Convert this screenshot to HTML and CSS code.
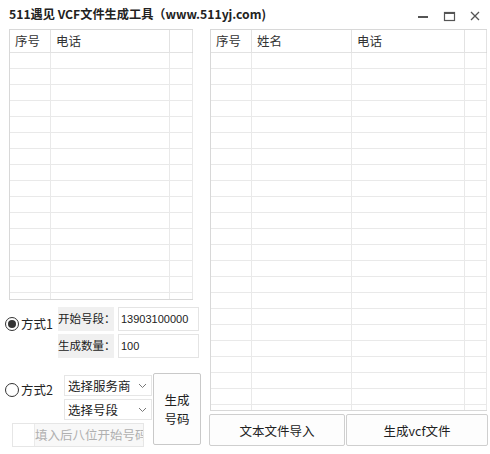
FILE: index.html
```html
<!DOCTYPE html>
<html>
<head>
<meta charset="utf-8">
<link rel="stylesheet" href="styles.css">
</head>
<body>
<div class="win">
  <div class="titlebar">
    <div class="title">511遇见 VCF文件生成工具（www.511yj.com)</div>
    <div class="controls">
      <svg class="ctl" width="14" height="14" viewBox="0 0 14 14"><rect x="2" y="7" width="10" height="2" fill="#555"/></svg>
      <svg class="ctl" width="14" height="14" viewBox="0 0 14 14"><rect x="2.5" y="3.5" width="10" height="8" fill="none" stroke="#555" stroke-width="1.2"/><rect x="2.5" y="3" width="10" height="2" fill="#555"/></svg>
      <svg class="ctl" width="14" height="14" viewBox="0 0 14 14"><path d="M3 3 L11 11 M11 3 L3 11" stroke="#555" stroke-width="1.3"/></svg>
    </div>
  </div>
  <div class="main">
    <div class="leftcol">
      <div class="grid grid-left">
        <div class="ghead">
          <div class="c c-no">序号</div>
          <div class="c c-tel1">电话</div>
          <div class="c c-sp"></div>
        </div>
        <div class="gbody">
          <div class="b c-no"></div>
          <div class="b c-tel1"></div>
          <div class="b c-sp last"></div>
        </div>
      </div>
      <div class="mode1">
        <div class="radio-row r1">
          <span class="radio checked"><span class="dot"></span></span>
          <span class="rlabel">方式1</span>
        </div>
        <div class="fields">
          <div class="frow">
            <span class="flabel">开始号段：</span>
            <span class="finput">13903100000</span>
          </div>
          <div class="frow">
            <span class="flabel">生成数量：</span>
            <span class="finput">100</span>
          </div>
        </div>
      </div>
      <div class="mode2">
        <div class="m2left">
          <div class="m2top">
            <div class="radio-row r2">
              <span class="radio"></span>
              <span class="rlabel">方式2</span>
            </div>
            <div class="selects">
              <div class="sel"><span>选择服务商</span><svg width="9" height="6" viewBox="0 0 9 6"><path d="M1 1 L4.5 4.5 L8 1" fill="none" stroke="#777" stroke-width="1"/></svg></div>
              <div class="sel"><span>选择号段</span><svg width="9" height="6" viewBox="0 0 9 6"><path d="M1 1 L4.5 4.5 L8 1" fill="none" stroke="#777" stroke-width="1"/></svg></div>
            </div>
          </div>
          <div class="dis">
            <span class="dis-a"></span>
            <span class="dis-b">填入后八位开始号码</span>
          </div>
        </div>
        <div class="genbtn">生成<br>号码</div>
      </div>
    </div>
    <div class="rightcol">
      <div class="grid grid-right">
        <div class="ghead">
          <div class="c c-no">序号</div>
          <div class="c c-name">姓名</div>
          <div class="c c-tel2">电话</div>
          <div class="c c-sp"></div>
        </div>
        <div class="gbody">
          <div class="b c-no"></div>
          <div class="b c-name"></div>
          <div class="b c-tel2"></div>
          <div class="b c-sp last"></div>
        </div>
      </div>
      <div class="btns">
        <div class="btn b-import">文本文件导入</div>
        <div class="btn b-gen">生成vcf文件</div>
      </div>
    </div>
  </div>
</div>
</body>
</html>
```

FILE: styles.css
```css
* { box-sizing: border-box; }
html, body { margin: 0; padding: 0; background: #fff; }
body {
  width: 490px; height: 454px; overflow: hidden;
  font-family: "Noto Sans CJK SC", "Microsoft YaHei", sans-serif;
  font-size: 12px; color: #222; white-space: nowrap;
}
.titlebar {
  height: 29px; display: flex; align-items: center; justify-content: space-between;
  padding: 0 8px 0 9px;
}
.title { font-weight: bold; font-size: 12.2px; letter-spacing: 0; margin-top: -2px; }
.controls { display: flex; gap: 12px; margin-top: 2px; }
.ctl { display: block; }
.main { display: flex; padding-left: 9px; }
.leftcol { width: 191px; flex-shrink: 0; display: flex; flex-direction: column; }
.rightcol { width: 278px; flex-shrink: 0; margin-left: 9px; display: flex; flex-direction: column; }

.grid { border: 1px solid #d8d8d8; display: flex; flex-direction: column; background: #fff; }
.grid-left { width: 184px; height: 271px; }
.grid-right { width: 277px; height: 382px; margin-left: 1px; }
.ghead { display: flex; height: 23px; border-bottom: 1px solid #e2e2e2; }
.ghead .c { border-right: 1px solid #e2e2e2; padding: 2px 0 0 5px; font-size: 12.5px; color: #333; line-height: 18px; }
.gbody {
  flex: 1; display: flex;
  background: repeating-linear-gradient(to bottom, transparent 0, transparent 15px, #e9e9e9 15px, #e9e9e9 16px);
}
.b { border-right: 1px solid #e9e9e9; }
.c-no { width: 41px; flex-shrink: 0; }
.c-tel1 { width: 119px; flex-shrink: 0; }
.c-sp { width: 23px; flex-shrink: 0; }
.grid-right .c-sp { width: 22px; }
.c-name { width: 100px; flex-shrink: 0; }
.c-tel2 { width: 113px; flex-shrink: 0; }

.mode1 { display: flex; margin-top: 7px; margin-left: -4px; }
.radio-row { display: flex; align-items: center; flex-shrink: 0; }
.r1 { margin-top: 7px; align-self: flex-start; }
.radio {
  width: 14px; height: 14px; border: 1px solid #333; border-radius: 50%; flex-shrink: 0;
  display: flex; align-items: center; justify-content: center; background: #fff;
}
.dot { width: 8px; height: 8px; border-radius: 50%; background: #333; }
.rlabel { margin-left: 2px; font-size: 12.5px; }
.fields { display: flex; flex-direction: column; gap: 3px; margin-left: 5px; flex-shrink: 0; }
.frow { display: flex; align-items: center; }
.flabel { background: #f0f0f0; width: 56px; height: 24px; font-size: 11.5px; line-height: 23px; flex-shrink: 0; overflow: hidden; }
.finput {
  margin-left: 4px; width: 81px; height: 24px; border: 1px solid #e4e4e4; flex-shrink: 0;
  font-family: "Liberation Sans", Arial, sans-serif; font-size: 11px; line-height: 22px; padding-left: 2px;
}

.mode2 { display: flex; margin-top: 17px; margin-left: -4px; }
.m2left { display: flex; flex-direction: column; flex-shrink: 0; }
.m2top { display: flex; }
.r2 { margin-top: 5px; align-self: flex-start; }
.selects { display: flex; flex-direction: column; gap: 3px; margin-left: 11px; }
.sel {
  width: 88px; height: 21px; border: 1px solid #e6e6e6; display: flex; align-items: center;
  justify-content: space-between; padding: 0 4px 0 3px; font-size: 12.5px; background: #fff;
}
.dis { display: flex; height: 24px; width: 132px; margin-left: 7px; margin-top: 3px; border: 1px solid #e6e6e6; }
.dis-a { width: 22px; flex-shrink: 0; background: #fff; border-right: 1px solid #eaeaea; }
.dis-b { flex: 1; min-width: 0; background: #f8f8f8; color: #b0b0b0; font-size: 12.5px; overflow: hidden; line-height: 22px; }
.genbtn {
  width: 48px; height: 72px; border: 1px solid #c9c9c9; border-radius: 2px; margin-left: 1px; margin-top: -2px; flex-shrink: 0;
  display: flex; align-items: center; justify-content: center; text-align: center; font-size: 12.5px; line-height: 19px;
  background: #fdfdfd;
}
.btns { display: flex; margin-top: 3px; }
.btn {
  height: 32px; border: 1px solid #cfcfcf; border-radius: 2px; display: flex; align-items: center; justify-content: center;
  font-size: 12.5px; background: #fdfdfd; flex-shrink: 0;
}
.b-import { width: 136px; }
.b-gen { width: 142px; margin-left: 1px; }
```
